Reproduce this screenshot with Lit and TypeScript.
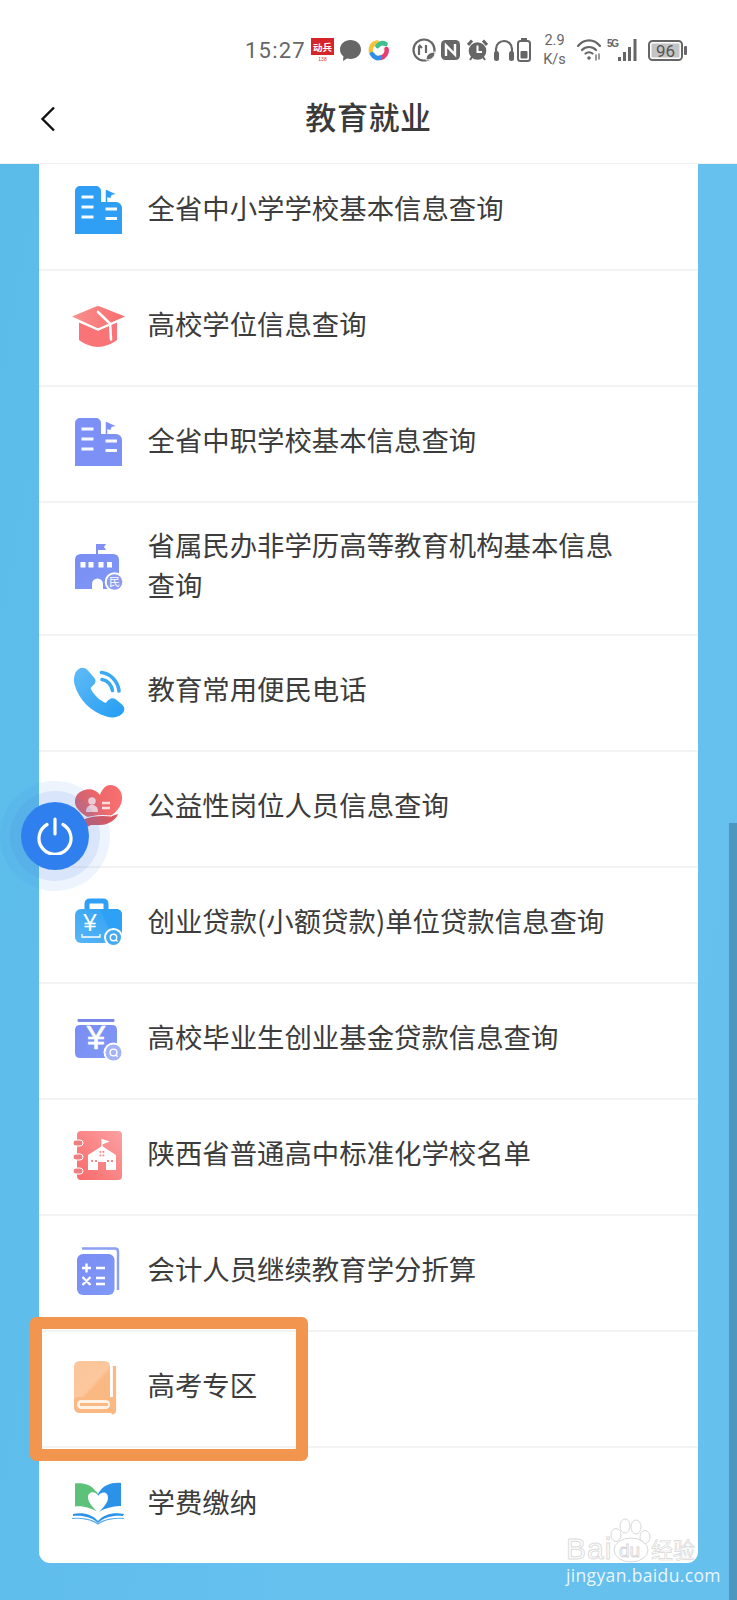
import { LitElement, html, css, svg } from "lit";
import { customElement } from "lit/decorators.js";

const defs = svg`
<defs>
  <linearGradient id="gPur" x1="0" y1="0" x2="1" y2="1"><stop offset="0" stop-color="#7a8cf4"/><stop offset="1" stop-color="#8099f6"/></linearGradient>
  <linearGradient id="gRed" x1="0" y1="0" x2="1" y2="0"><stop offset="0" stop-color="#f98f8f"/><stop offset="1" stop-color="#f76d6d"/></linearGradient>
  <linearGradient id="gPhone" x1="0" y1="0" x2="1" y2="1"><stop offset="0" stop-color="#60bbf6"/><stop offset="1" stop-color="#259df3"/></linearGradient>
  <linearGradient id="gHeart" x1="0" y1="0" x2="1" y2="0"><stop offset="0" stop-color="#e25f63"/><stop offset="1" stop-color="#f97070"/></linearGradient>
  <linearGradient id="gCase" x1="0" y1="1" x2="1" y2="0"><stop offset="0" stop-color="#58b6f5"/><stop offset="1" stop-color="#2ea0f5"/></linearGradient>
  <linearGradient id="gNote" x1="0" y1="1" x2="1" y2="0"><stop offset="0" stop-color="#f86a6b"/><stop offset="1" stop-color="#fca0a2"/></linearGradient>
  <linearGradient id="gBook" x1="0" y1="0" x2="1" y2="1"><stop offset="0" stop-color="#fbc599"/><stop offset="0.55" stop-color="#fcc79d"/><stop offset="0.62" stop-color="#fab883"/><stop offset="1" stop-color="#fab883"/></linearGradient>
</defs>`;

const building = (fill: string) => svg`
  <path d="M1 5a5 5 0 0 1 5-5h16a5 5 0 0 1 5 5v11h15a6 6 0 0 1 6 6v26H1z" fill="${fill}"/>
  <path d="M32.500 16V4" stroke="${fill}" stroke-width="1.500"/>
  <path d="M32.500 4l9 4-4 1-1 3-4-1z" fill="${fill}"/>
  <g stroke="#fff" stroke-width="3" opacity=".95">
    <path d="M7.500 11h12M7.500 21h12M7.500 31h12M31.500 23h11.500M31.500 32.500h11.500"/>
  </g>`;

const icons: Record<string, unknown> = {
  school: building("#2f9ff5"),
  hat: svg`
    <path d="M5 20l19 8.500L43 20v18c-5 4-13 7-19 7s-14-3-19-7z" fill="#f97476"/>
    <path d="M-2 14.500 22 4.500q2-1 4 0l25 10-25 11q-2 1-4 0z" fill="url(#gRed)"/>
    <path d="M24 10l12 11.500 1 16" fill="none" stroke="#fff" stroke-width="2.600" stroke-linecap="round"/>
    <path d="M-1 17l25 11 25-11" fill="none" stroke="#fff" stroke-width="1.500"/>`,
  school2: building("#7d90f5"),
  min: svg`
    <path d="M23 1v10" stroke="#7f8ff4" stroke-width="2"/>
    <path d="M23 1h9l-2 3 2 3h-9z" fill="#7f8ff4"/>
    <path d="M1 46V17q0-6 6-6h32q6 0 6 6v29H29V41a5.500 5.500 0 0 0-11 0v5z" fill="url(#gPur)"/>
    <g fill="#fff"><rect x="6.500" y="19" width="5" height="5.500"/><rect x="14.500" y="19" width="5" height="5.500"/><rect x="24.500" y="19" width="5" height="5.500"/><rect x="33" y="19" width="5" height="5.500"/></g>
    <circle cx="40.500" cy="39" r="9.800" fill="#fff"/><circle cx="40.500" cy="39" r="7.800" fill="#8d9bf3"/>
    <text x="40.500" y="43" text-anchor="middle" font-size="11" fill="#fff" font-family="Noto Sans CJK SC, sans-serif">民</text>`,
  phone: svg`
    <path d="M1.500 5.500C5-.5 10-.500 13.500 3l6.500 7.500c2.300 2.700 2 5-.5 7.500l-3 3c3 6.500 8.500 12 15 15l3-3c2.500-2.300 5-2.500 7.500-.5l6 5c3.200 3 3 6.500 0 9.500-4 3.500-10 4.300-15.500 2.500C17 45 5 33 .5 17.500-.7 13 0 9 1.500 5.500z" fill="url(#gPhone)"/>
    <path d="M27.500 5.500c9 1 16.500 9 17.500 18.500M28 12.500c5 .7 9.500 5 10.500 11" fill="none" stroke="#3aa9f2" stroke-width="3.600" stroke-linecap="round"/>`,
  heart: svg`
    <path d="M26 12C22 6 14 5 8 8 1 11-1 19 3 25c5 7 13 11 23 13 12-4 21-12 22-21 1-9-5-15-12-15-4 0-8 4-10 10z" fill="url(#gHeart)"/>
    <circle cx="18" cy="18" r="3.800" fill="#fbd3d4"/>
    <path d="M12 29c0-5 2.500-7 6-7s6 2 6 7z" fill="#fbd3d4"/>
    <path d="M28 20h8M28 25h8" stroke="#fde0e0" stroke-width="2.400"/>
    <path d="M9 36c9-5 21-4 29-3l6-2c-2 6-10 11-18 11h-9l-6 3z" fill="#d9575d"/>
    <path d="M9 36c10-4 20-4 29-3" stroke="#fff" stroke-width="1.200" fill="none"/>`,
  loan: svg`
    <path d="M13 11V5q0-3 3-3h13q3 0 3 3v6" fill="none" stroke="#2fa0f5" stroke-width="5"/>
    <rect x="18" y="5" width="9" height="2.500" fill="#fff"/>
    <rect x="1" y="10" width="47" height="34" rx="6" fill="url(#gCase)"/>
    <path d="M26 10h16q6 0 6 6v14L40 40z" fill="#2ea0f5"/>
    <text x="16" y="32" text-anchor="middle" font-size="24" fill="#fff" font-family="Liberation Sans, sans-serif">¥</text>
    <path d="M8 35v3h18v-3" fill="none" stroke="#fff" stroke-width="1.300"/>
    <circle cx="39.500" cy="38.500" r="9.500" fill="#fff"/><circle cx="39.500" cy="38.500" r="7.500" fill="#45aaf2"/>
    <circle cx="39.500" cy="38.500" r="3.200" fill="none" stroke="#fff" stroke-width="1.400"/><path d="M41.500 40.500l2 2" stroke="#fff" stroke-width="1.400"/>`,
  fund: svg`
    <rect x="3.500" y="4" width="37" height="3" rx="1" fill="#7a89e8"/>
    <path d="M1 15q0-5 5-5h32q5 0 5 5v28H6q-5 0-5-5z" fill="url(#gPur)"/>
    <text x="22" y="34" text-anchor="middle" font-size="33" fill="#fff" stroke="#fff" stroke-width=".6" font-family="Liberation Sans, sans-serif">¥</text>
    <circle cx="39.500" cy="37.500" r="10" fill="#fff"/><circle cx="39.500" cy="37.500" r="8" fill="#a4b2f6"/>
    <circle cx="39.500" cy="37.500" r="3.400" fill="none" stroke="#fff" stroke-width="1.400"/><path d="M41.700 39.800l2 2" stroke="#fff" stroke-width="1.400"/>`,
  note: svg`
    <rect x="3" y="0" width="45" height="49" rx="4" fill="url(#gNote)"/>
    <g fill="#ed7f80" stroke="#fff" stroke-width="1"><rect x="-1" y="9" width="10" height="6" rx="3"/><rect x="-1" y="23" width="10" height="6" rx="3"/><rect x="-1" y="37" width="10" height="6" rx="3"/></g>
    <path d="M28 16V8.500l6 2-6 2.500" stroke="#fff" stroke-width="1.200" fill="#fff"/>
    <path d="M14 39V24l14-9 14 9v15H32v-8h-8v8z" fill="#fff"/>
    <g fill="#f3888a"><rect x="25.500" y="20" width="1.800" height="1.800"/><rect x="28.500" y="20" width="1.800" height="1.800"/><rect x="25.500" y="23.500" width="1.800" height="1.800"/><rect x="28.500" y="23.500" width="1.800" height="1.800"/><rect x="17" y="29" width="2" height="2"/><rect x="21" y="29" width="2" height="2"/><rect x="33" y="29" width="2" height="2"/><rect x="37" y="29" width="2" height="2"/></g>`,
  calc: svg`
    <path d="M8 1.500h33q3 0 3 3V43" fill="none" stroke="#8ea0f5" stroke-width="2.400"/>
    <rect x="3" y="7" width="37.500" height="41" rx="6" fill="url(#gPur)"/>
    <path d="M8 21h9M12.500 16.500v9M22 21h9M8.500 30l8 8M16.500 30l-8 8M22 31h9M22 37h9" stroke="#fff" stroke-width="2.400" fill="none"/>`,
  book: svg`
    <path d="M0 4q0-6 6-6h24q6 0 6 6v33H0z" fill="url(#gBook)"/>
    <path d="M40.500 3V47q0 3-3 3" fill="none" stroke="#fab883" stroke-width="3.200"/>
    <path d="M0 37q1-3 5-3h34v16H6q-6 0-6-6z" fill="#fab883"/>
    <rect x="3" y="37" width="33" height="9" rx="4.500" fill="#fff3e8"/>
    <rect x="6" y="40" width="28" height="3" fill="#fab883"/>`,
  pay: svg`
    <path d="M1 3.500c8-1 16 1 20 7 3 2 3 3 3 5-3-5-10-4-10 2 0 5 6 11 9 14-8-5-18-6-22-5z" fill="#5cc27a"/>
    <path d="M47 3c-9-1-17 2-21 8-2 2-2 3-2 5 3-5 10-5 10 2 0 5-6 11-9 14 7-5 18-6 22-6z" fill="#2c92e8"/>
    <path d="M-1 34c9-2 19 0 25 7 6-7 16-9 26-7l-1 2c-9-1-19 1-25 7-6-6-16-8-25-7z" fill="#2c92e8"/>
    <path d="M-2 38.500c9-1 20 1 26 5.500 6-4.500 17-6.500 26-5.500" fill="none" stroke="#5aaee8" stroke-width="1.200"/>`,
};

const rows: [string, string][] = [
  ["school", "全省中小学学校基本信息查询"],
  ["hat", "高校学位信息查询"],
  ["school2", "全省中职学校基本信息查询"],
  ["min", "省属民办非学历高等教育机构基本信息查询"],
  ["phone", "教育常用便民电话"],
  ["heart", "公益性岗位人员信息查询"],
  ["loan", "创业贷款(小额贷款)单位贷款信息查询"],
  ["fund", "高校毕业生创业基金贷款信息查询"],
  ["note", "陕西省普通高中标准化学校名单"],
  ["calc", "会计人员继续教育学分折算"],
  ["book", "高考专区"],
  ["pay", "学费缴纳"],
];

@customElement("app-root")
export class AppRoot extends LitElement {
  static styles = css`
    :host {
      display: block;
      width: 737px;
      height: 1600px;
      position: relative;
      overflow: hidden;
      font-family: "Noto Sans CJK SC", "Noto Sans", sans-serif;
      background: linear-gradient(100deg, #5abbe9 0%, #66c1ef 60%, #66c0ee 100%);
    }
    .page { display: flex; flex-direction: column; height: 1600px; }
    .top { background: #fff; border-bottom: 1px solid #f0f0f0; height: 164px; box-sizing: border-box; flex: none; }
    .status {
      height: 84px; box-sizing: border-box; padding: 16px 0 0 245px;
      display: flex; align-items: center; color: #666;
    }
    .status svg { flex: none; display: block; }
    .time { font-family: "Roboto", sans-serif; font-size: 22px; letter-spacing: 1.2px; width: 58px; white-space: nowrap; }
    .speed { font-family: "Roboto", sans-serif; font-size: 14.500px; line-height: 19px; width: 25px; text-align: center; white-space: nowrap; }
    .m3 { margin-left: 3px; } .m5 { margin-left: 5px; } .m6 { margin-left: 6px; } .m7 { margin-left: 7px; }
    .m8 { margin-left: 8px; } .m10 { margin-left: 10px; } .m11 { margin-left: 11px; } .m23 { margin-left: 23px; }
    .nav {
      height: 79px; box-sizing: border-box; padding-bottom: 16px; position: relative;
      display: flex; align-items: center; justify-content: center;
    }
    .back { position: absolute; left: 40px; top: 22px; }
    .title { font-size: 31px; font-weight: 500; color: #3a3a3a; letter-spacing: .6px; line-height: 40px; }
    .main { flex: 1; padding: 0 39px; overflow: hidden; min-height: 0; }
    .card { background: #fff; border-radius: 0 0 11px 11px; margin-top: -9px; }
    .row {
      display: flex; align-items: center; box-sizing: border-box;
      min-height: 116px; padding: 24px 60px 28px 33px;
      border-bottom: 2px solid #f3f3f3;
    }
    .row:last-child { border-bottom: 0; min-height: 115px; }
    .icon { width: 52px; height: 52px; flex: none; margin-right: 23.500px; display: block; overflow: visible; }
    .text { font-size: 27.400px; line-height: 39.500px; color: #3c3c3c; transform: translateY(-2px); }
    .mark {
      position: absolute; left: 30px; top: 1317px; width: 278px; height: 144px; box-sizing: border-box;
      border: 12px solid #f2954f; border-radius: 6px;
    }
    .scrollbar { position: absolute; left: 729px; top: 823px; width: 8px; height: 777px; background: #4b97bf; }
    .power {
      position: absolute; left: 0; top: 781px; width: 110px; height: 110px; border-radius: 50%;
      background: rgba(66, 130, 235, .09);
      display: flex; align-items: center; justify-content: center;
    }
    .power-mid {
      width: 90px; height: 90px; border-radius: 50%; background: rgba(66, 130, 235, .13);
      display: flex; align-items: center; justify-content: center;
    }
    .power-in {
      width: 68px; height: 68px; border-radius: 50%; background: #2f80ee;
      display: flex; align-items: center; justify-content: center;
    }
    .wm { position: absolute; left: 566px; top: 1518px; width: 140px; height: 72px; }
    .wm-site {
      position: absolute; left: 0; top: 45px; font-family: "Open Sans", sans-serif; font-size: 17.500px; line-height: 24px;
      color: rgba(255,255,255,.88); letter-spacing: .35px; white-space: nowrap;
    }
    .wm-logo {
      position: absolute; left: 0; top: 16px; font-family: "Liberation Sans", sans-serif; font-size: 30px; line-height: 30px;
      color: rgba(255,255,255,.6); -webkit-text-stroke: 1px #dcdcdc; letter-spacing: 1px; white-space: nowrap;
    }
    .wm-du {
      position: absolute; left: 53px; top: 23px; font-family: "Liberation Sans", sans-serif; font-size: 19px; line-height: 20px;
      color: rgba(255,255,255,.6); -webkit-text-stroke: .8px #d4d4d4; white-space: nowrap;
    }
    .wm-cn { position: absolute; left: 85px; top: 17px; font-size: 22px; line-height: 26px; color: rgba(255,255,255,.5); -webkit-text-stroke: .7px #d8d8d8; white-space: nowrap; }
    .paw { position: absolute; left: 44px; top: 0; }
  `;

  render() {
    return html`
      <div class="page">
        <div class="top">
          <div class="status">
            <span class="time">15:27</span>
            <svg class="m8" width="23" height="24" viewBox="0 0 23 24">
              <rect width="23" height="24" fill="#fff"/><rect width="23" height="17" fill="#d5252b"/>
              <text x="11.500" y="12.500" text-anchor="middle" font-size="9.500" font-weight="700" fill="#fff" font-family="Noto Sans CJK SC, sans-serif">动兵</text>
              <text x="11.500" y="23" text-anchor="middle" font-size="5" fill="#c33" font-family="Liberation Sans, sans-serif">138</text>
            </svg>
            <svg class="m6" width="21" height="21" viewBox="0 0 21 21"><path d="M10.500 0C16.300 0 21 3.900 21 9.500S16.300 19 10.500 19c-1.300 0-2.500-.2-3.500-.5L3 21l.4-4.700C1.200 14.600 0 12.200 0 9.500 0 3.900 4.700 0 10.500 0z" fill="#666"/></svg>
            <svg class="m7" width="21" height="21" viewBox="0 0 21 21" fill="none" stroke-width="4.500" stroke-linecap="round">
              <path d="M3 12C2 7 5 3 9 2.500" stroke="#f5c33b"/><path d="M9.500 6C12 3 15 2.500 17.500 4" stroke="#3fc08f"/>
              <path d="M18.500 9c1 4-2 8-6 9" stroke="#e83e6f"/><path d="M4 14c2 3 5 5 8 3.500" stroke="#2f8ee8"/>
            </svg>
            <svg class="m23" width="24" height="24" viewBox="0 0 24 24" fill="none" stroke="#666">
              <circle cx="12" cy="12" r="10.500" stroke-width="2.200"/>
              <path d="M7 8v9M10 10l-3-3M14 7v8" stroke-width="2.200"/>
              <path d="M14 22c0-5 3-8 9-8 0 5-3 8-9 8z" fill="#666" stroke="#fff" stroke-width="1"/>
            </svg>
            <svg class="m5" width="19" height="20" viewBox="0 0 19 20"><rect width="19" height="20" rx="4.500" fill="#666"/><path d="M5 16V5.500L14 14.500V4" fill="none" stroke="#fff" stroke-width="2.400"/></svg>
            <svg class="m7" width="21" height="22" viewBox="0 0 21 22"><circle cx="10.500" cy="12" r="8.800" fill="#666"/><path d="M1 6l4-4.500M20 6l-4-4.500" stroke="#666" stroke-width="3"/><path d="M3 21l2-3M18 21l-2-3" stroke="#666" stroke-width="2"/><path d="M10.500 6.500V13h4.500" fill="none" stroke="#fff" stroke-width="2"/></svg>
            <svg class="m6" width="20" height="22" viewBox="0 0 20 22" fill="none"><path d="M2 14V10a8 8 0 0 1 16 0v4" stroke="#666" stroke-width="2.200"/><rect x="0" y="12" width="5" height="10" rx="2.500" fill="#666"/><rect x="15" y="12" width="5" height="10" rx="2.500" fill="#666"/></svg>
            <svg class="m3" width="14" height="24" viewBox="0 0 14 24" fill="none"><rect x="4" y="0" width="6" height="2.500" fill="#666"/><rect x="1" y="3" width="12" height="20" rx="2.500" stroke="#666" stroke-width="2"/><rect x="3.500" y="13" width="7" height="7.500" rx="1" fill="#666"/></svg>
            <span class="speed m11">2.9<br />K/s</span>
            <svg class="m10" width="24" height="22" viewBox="0 0 24 22" fill="none" stroke="#666" stroke-width="2.200" stroke-linecap="round"><path d="M1 7C7-.5 17-.5 23 7M5 11c4-4 10-4 14 0M8.500 14.500c2-1.700 5-1.700 7 0"/><circle cx="12" cy="19" r="1.800" fill="#666" stroke="none"/><path d="M19 16v5M22 15v5" stroke-width="1.300"/></svg>
            <svg class="m6" width="33" height="24" viewBox="0 0 33 24">
              <text x="0" y="9" font-size="10" font-weight="700" fill="#666" font-family="Liberation Sans Narrow, Liberation Sans, sans-serif" textLength="12">5G</text>
              <g fill="#666"><rect x="11" y="19" width="3" height="4"/><rect x="16" y="14" width="3" height="9"/><rect x="21" y="9" width="3" height="14"/><rect x="26.500" y="1" width="3" height="22"/></g>
            </svg>
            <svg class="m8" width="39" height="21" viewBox="0 0 39 21">
              <rect x="1" y="1" width="33" height="19" rx="3.500" fill="none" stroke="#666" stroke-width="2"/>
              <rect x="3.500" y="3.500" width="28" height="14" rx="1" fill="#c4c4c4"/>
              <rect x="36" y="6" width="3" height="9" rx="1" fill="#666"/>
              <text x="17.500" y="16.500" text-anchor="middle" font-size="17" fill="#555" font-family="Roboto, sans-serif">96</text>
            </svg>
          </div>
          <div class="nav">
            <svg class="back" width="16" height="26" viewBox="0 0 16 26" fill="none"><path d="M14 1.500 2.500 13 14 24.500" stroke="#111" stroke-width="2.400"/></svg>
            <span class="title">教育就业</span>
          </div>
        </div>
        <div class="main">
          <div class="card">
            ${rows.map(
              ([icon, text]) => html`<div class="row">
                <svg class="icon" viewBox="-2 -2 52 52">${defs}${icons[icon]}</svg>
                <span class="text">${text}</span>
              </div>`
            )}
          </div>
        </div>
      </div>
      <div class="scrollbar"></div>
      <div class="mark"></div>
      <div class="power"><div class="power-mid"><div class="power-in">
        <svg width="36" height="38" viewBox="0 0 36 38" fill="none" stroke="#fff" stroke-width="3.200" stroke-linecap="round">
          <path d="M10 7.500a16 16 0 1 0 16 0"/><path d="M18 2v15"/>
        </svg>
      </div></div></div>
      <div class="wm">
        <svg class="paw" width="44" height="46" viewBox="0 0 44 46" fill="rgba(255,255,255,.5)" stroke="#d8d8d8" stroke-width="1">
          <ellipse cx="6" cy="17" rx="5" ry="6.500"/><ellipse cx="15" cy="8" rx="5" ry="7"/><ellipse cx="26" cy="9" rx="5" ry="7"/><ellipse cx="35" cy="19" rx="5" ry="6.500"/>
          <ellipse cx="21" cy="32" rx="17" ry="12"/>
        </svg>
        <span class="wm-logo">Bai</span>
        <span class="wm-du">du</span>
        <span class="wm-cn">经验</span>
        <span class="wm-site">jingyan.baidu.com</span>
      </div>
    `;
  }
}
